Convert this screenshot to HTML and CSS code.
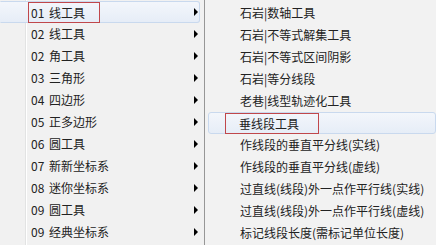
FILE: index.html
```html
<!DOCTYPE html>
<html lang="zh-CN">
<head>
  <meta charset="UTF-8" />
  <title>线工具菜单</title>
  <link rel="stylesheet" href="styles.css">
</head>
<body>
  <div class="screen">
    <ul class="menu">
      <li class="item active"><span class="mark mark-left">01 线工具</span><i class="arrow"></i></li>
      <li class="item">02 线工具<i class="arrow"></i></li>
      <li class="item">02 角工具<i class="arrow"></i></li>
      <li class="item">03 三角形<i class="arrow"></i></li>
      <li class="item">04 四边形<i class="arrow"></i></li>
      <li class="item">05 正多边形<i class="arrow"></i></li>
      <li class="item">06 圆工具<i class="arrow"></i></li>
      <li class="item">07 新新坐标系<i class="arrow"></i></li>
      <li class="item">08 迷你坐标系<i class="arrow"></i></li>
      <li class="item">09 圆工具<i class="arrow"></i></li>
      <li class="item">09 经典坐标系<i class="arrow"></i></li>
    </ul>
    <ul class="submenu">
      <li class="sub">石岩|数轴工具</li>
      <li class="sub">石岩|不等式解集工具</li>
      <li class="sub">石岩|不等式区间阴影</li>
      <li class="sub">石岩|等分线段</li>
      <li class="sub">老巷|线型轨迹化工具</li>
      <li class="sub active"><span class="mark mark-right">垂线段工具</span></li>
      <li class="sub">作线段的垂直平分线(实线)</li>
      <li class="sub">作线段的垂直平分线(虚线)</li>
      <li class="sub">过直线(线段)外一点作平行线(实线)</li>
      <li class="sub">过直线(线段)外一点作平行线(虚线)</li>
      <li class="sub">标记线段长度(需标记单位长度)</li>
    </ul>
  </div>
</body>
</html>
```

FILE: styles.css
```css
body {
  margin: 0;
  background: #f0f0f0;
  font-family: "Noto Sans CJK SC", "Noto Sans", sans-serif;
  font-size: 12px;
  color: #222;
}
.screen {
  display: flex;
  width: 436px;
  height: 245px;
  overflow: hidden;
}
.menu, .submenu {
  list-style: none;
  margin: 0;
}
.menu {
  width: 204px;
  padding: 1px 0 0 0;
  background: linear-gradient(to right, #f1f1f1 25px, #e2e3e3 25px, #e2e3e3 26px, #fff 26px, #fff 27px, #f1f1f1 27px);
}
.submenu {
  flex: 1;
  padding: 2px 0 0 3px;
  border-left: 1px solid #979797;
  background: #f2f2f2;
}
.item, .sub {
  display: flex;
  align-items: center;
  height: 22px;
  line-height: 22px;
  white-space: nowrap;
  border: 1px solid transparent;
  box-sizing: border-box;
}
.item {
  padding-left: 30px;
  margin-right: 4px;
  word-spacing: 2px;
}
.sub {
  padding-left: 31px;
}
.active {
  background: linear-gradient(#f3f6fb, #e6edf7);
  border-color: #c9d9ee;
  border-radius: 3px;
}
.item.active {
  border-left-color: transparent;
  border-radius: 0 3px 3px 0;
}
.arrow {
  margin-left: auto;
  margin-right: 1px;
  width: 0;
  height: 0;
  border-top: 4px solid transparent;
  border-bottom: 4px solid transparent;
  border-left: 4px solid #000;
}
.mark {
  border: 1px solid #c0474b;
  line-height: 19px;
}
.mark-left {
  margin: 0 -15px 0 -3px;
  padding: 0 14px 0 2px;
}
.mark-right {
  margin: 0 -20px 0 -15px;
  padding: 0 19px 0 13px;
}
```
